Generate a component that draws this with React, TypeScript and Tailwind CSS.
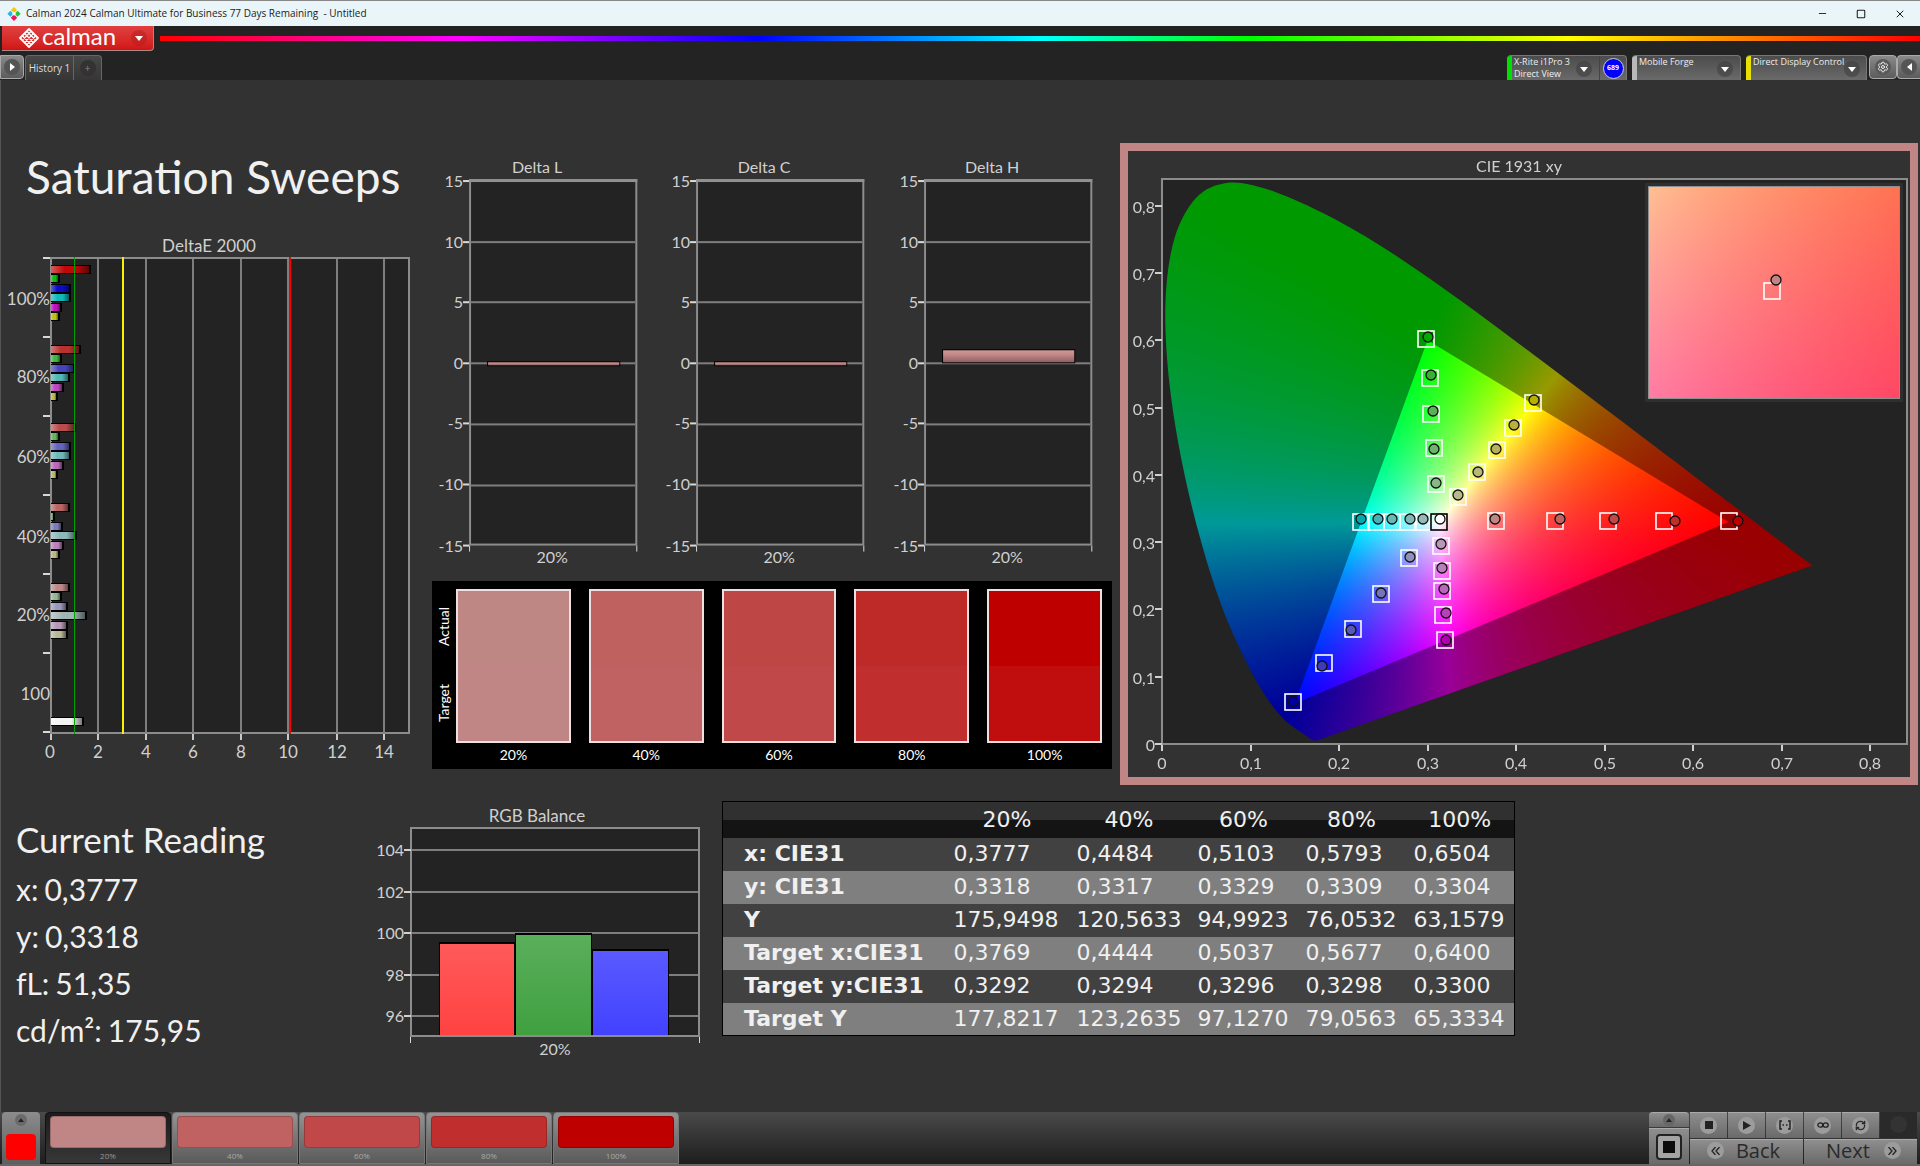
import { useLayoutEffect, useRef } from "react";
import type { ReactNode } from "react";
import { Minus, Square, X, Settings, RefreshCw } from "lucide-react";

/* ---------- shared data ---------- */

const LEVELS = [
  { label: "20%", actual: "#be8784", target: "#c08685" },
  { label: "40%", actual: "#be615f", target: "#c06261" },
  { label: "60%", actual: "#be4745", target: "#c04848" },
  { label: "80%", actual: "#be2a28", target: "#c02f2e" },
  { label: "100%", actual: "#be0000", target: "#c00d0d" },
];

/* ---------- DeltaE 2000 ---------- */

type Bar = [end: number, color: string];
const DELTA_E: { label: string; y: number; labelY: number; bars: Bar[] }[] = [
  { label: "100%", y: 34, labelY: 64, bars: [[91, "#c00808"], [60, "#10b810"], [71, "#0c0cc0"], [71, "#10b8b8"], [62, "#c010c0"], [60, "#c0c010"]] },
  { label: "80%", y: 114, labelY: 142, bars: [[81, "#bc3030"], [62, "#40b840"], [75, "#4444bc"], [70, "#50b8b8"], [64, "#bc48bc"], [58, "#bcbc48"]] },
  { label: "60%", y: 192, labelY: 222, bars: [[76, "#bc4c4c"], [60, "#5cb85c"], [71, "#6464bc"], [71, "#70b8b8"], [64, "#bc68bc"], [58, "#bcbc6c"]] },
  { label: "40%", y: 272, labelY: 302, bars: [[70, "#bc6464"], [55, "#74b874"], [63, "#7c7cbc"], [77, "#8cb8b8"], [64, "#bc80bc"], [60, "#b8b880"]] },
  { label: "20%", y: 352, labelY: 380, bars: [[70, "#bc8888"], [62, "#94b894"], [68, "#9898bc"], [87, "#a0b4b4"], [68, "#b898b8"], [68, "#b8b898"]] },
];

function HBar({ y, end, color }: { y: number; end: number; color: string }) {
  return (
    <g>
      <rect x={51} y={y - 4} width={end - 51} height={9} fill="#000" />
      <rect x={51} y={y - 3} width={end - 53} height={7} fill={color} />
      <rect x={51} y={y - 3} width={end - 53} height={7} fill="url(#barShade)" />
    </g>
  );
}

function DeltaEChart() {
  return (
    <svg viewBox="0 0 430 536" className="block w-full fill-[#d0d0d0] font-[Lato,sans-serif] text-[17px]" role="img" aria-label="DeltaE 2000">
      <defs>
        <linearGradient id="barShade">
          <stop offset="0" stopColor="#fff" stopOpacity="0.35" />
          <stop offset="0.35" stopColor="#fff" stopOpacity="0" />
          <stop offset="0.65" stopColor="#000" stopOpacity="0" />
          <stop offset="1" stopColor="#000" stopOpacity="0.5" />
        </linearGradient>
      </defs>
      <text x={209} y={17} textAnchor="middle">DeltaE 2000</text>
      <rect x={51} y={23} width={358} height={475} fill="#232323" stroke="#8c8c8c" strokeWidth={2} />
      {[0, 1, 2, 3, 4, 5, 6].map((i) => (
        <rect key={i} x={43} y={22 + i * 79} width={7} height={2} fill="#d8d8d8" />
      ))}
      {[98, 146, 193, 241, 288, 337, 384].map((x, i) => (
        <g key={x}>
          <rect x={x - 1} y={24} width={2} height={474} fill="#7e7e7e" />
          <rect x={x - 1} y={499} width={2} height={6} fill="#c8c8c8" />
          <text x={x} y={523} textAnchor="middle">{2 * (i + 1)}</text>
        </g>
      ))}
      <rect x={50} y={499} width={2} height={6} fill="#c8c8c8" />
      <text x={50} y={523} textAnchor="middle">0</text>
      {DELTA_E.map((g) => (
        <g key={g.label}>
          <text x={50} y={g.labelY + 6} textAnchor="end">{g.label}</text>
          {g.bars.map(([end, color], i) => (
            <HBar key={color} y={g.y + Math.round(i * 9.4)} end={end} color={color} />
          ))}
        </g>
      ))}
      <text x={50} y={465} textAnchor="end">100</text>
      <HBar y={486} end={84} color="#f4f4f4" />
      <rect x={74} y={22} width={1} height={477} fill="#00a000" />
      <rect x={122} y={22} width={2} height={477} fill="#f4f400" />
      <rect x={289} y={22} width={2} height={477} fill="#f80000" />
    </svg>
  );
}

/* ---------- Delta L / C / H ---------- */

function DeltaChart({ title, top, height }: { title: string; top: number; height: number }) {
  return (
    <svg viewBox="0 0 227 416" className="block w-full fill-[#d0d0d0] font-[Lato,sans-serif] text-[16px]" role="img" aria-label={title}>
      <defs>
        <linearGradient id="pinkBar" x1="0" y1="0" x2="0" y2="1">
          <stop offset="0" stopColor="#cf9a99" />
          <stop offset="0.4" stopColor="#c08685" />
          <stop offset="1" stopColor="#8d6060" />
        </linearGradient>
      </defs>
      <text x={107} y={23} textAnchor="middle">{title}</text>
      <rect x={40} y={30} width={166} height={364} fill="#232323" stroke="#8c8c8c" strokeWidth={2} />
      <rect x={39} y={29} width={168} height={3} fill="#909090" />
      {[15, 10, 5, 0, -5, -10, -15].map((v, i) => (
        <g key={v}>
          {i > 0 && i < 6 && <rect x={41} y={30 + Math.round(i * 60.7)} width={164} height={2} fill="#7e7e7e" />}
          <rect x={33} y={30 + Math.round(i * 60.6)} width={6} height={2} fill="#d8d8d8" />
          <text x={33} y={37 + Math.round(i * 60.6)} textAnchor="end">{v}</text>
        </g>
      ))}
      <rect x={39} y={395} width={1} height={6} fill="#d8d8d8" />
      <rect x={206} y={395} width={1} height={6} fill="#d8d8d8" />
      <rect x={57} y={top} width={133} height={height} fill="#000" />
      <rect x={58} y={top + 1} width={131} height={height - 2} fill="url(#pinkBar)" />
      <text x={122} y={412} textAnchor="middle">20%</text>
    </svg>
  );
}

/* ---------- swatch comparison ---------- */

function SwatchPanel() {
  return (
    <div className="ml-0.5 mr-2 flex bg-black pt-2 pr-2.5 pb-1 font-[Lato,sans-serif] text-sm text-white">
      <div className="flex w-6 shrink-0 flex-col items-center justify-around pb-6">
        <span className="rotate-180 [writing-mode:vertical-rl]">Actual</span>
        <span className="rotate-180 [writing-mode:vertical-rl]">Target</span>
      </div>
      <div className="grid flex-1 grid-cols-5 gap-[18px]">
        {LEVELS.map((l) => (
          <figure key={l.label} className="text-center">
            <div className="flex h-[154px] flex-col border-2 border-[#eee0e0]">
              <div className="flex-1" style={{ backgroundColor: l.actual }} />
              <div className="flex-1" style={{ backgroundColor: l.target }} />
            </div>
            <figcaption className="pt-0.5">{l.label}</figcaption>
          </figure>
        ))}
      </div>
    </div>
  );
}

/* ---------- CIE 1931 xy ---------- */

const LOCUS: [number, number][] = [
  [0.1741, 0.005], [0.1714, 0.0051], [0.1689, 0.0069], [0.1644, 0.0109], [0.1566, 0.0177], [0.144, 0.0297],
  [0.1355, 0.0399], [0.1241, 0.0578], [0.1096, 0.0868], [0.0913, 0.1327], [0.0687, 0.2007], [0.0454, 0.295],
  [0.0235, 0.4127], [0.0082, 0.5384], [0.0039, 0.6548], [0.0139, 0.7502], [0.0389, 0.812], [0.0743, 0.8338],
  [0.1142, 0.8262], [0.1547, 0.8059], [0.1929, 0.7816], [0.2296, 0.7543], [0.2658, 0.7243], [0.3016, 0.6923],
  [0.3373, 0.6589], [0.3731, 0.6245], [0.4087, 0.5896], [0.4441, 0.5547], [0.4788, 0.5202], [0.5125, 0.4866],
  [0.5448, 0.4544], [0.5752, 0.4242], [0.6029, 0.3965], [0.627, 0.3725], [0.6482, 0.3514], [0.6658, 0.334],
  [0.6915, 0.3083], [0.7079, 0.292], [0.719, 0.2809], [0.726, 0.274], [0.7347, 0.2653],
];

const W = 782;
const H = 626;
const PLOT = { left: 34, top: 28, right: 779, bottom: 593 };
const toPx = (x: number, y: number): [number, number] => [PLOT.left + x * 885, PLOT.bottom - y * 673];

/* linear Rec.709 colour of a chromaticity, scaled to its brightest channel */
function chroma(x: number, y: number): [number, number, number] {
  const yy = Math.max(y, 0.0001);
  const X = x / yy;
  const Z = (1 - x - yy) / yy;
  const rgb = [
    3.2406 * X - 1.5372 - 0.4986 * Z,
    -0.9689 * X + 1.8758 + 0.0415 * Z,
    0.0557 * X - 0.204 + 1.057 * Z,
  ].map((v) => Math.max(v, 0));
  const max = Math.max(...rgb);
  return [rgb[0] / max, rgb[1] / max, rgb[2] / max];
}

function paintField(w: number, h: number, gain: number, at: (px: number, py: number) => [number, number]) {
  const c = document.createElement("canvas");
  c.width = w;
  c.height = h;
  const ctx = c.getContext("2d")!;
  const img = ctx.createImageData(w, h);
  for (let j = 0; j < h; j++) {
    for (let i = 0; i < w; i++) {
      const [x, y] = at(i, j);
      const [r, g, b] = chroma(x, y);
      const o = (j * w + i) * 4;
      img.data[o] = r * 255 * gain;
      img.data[o + 1] = g * 255 * gain;
      img.data[o + 2] = b * 255 * gain;
      img.data[o + 3] = 255;
    }
  }
  ctx.putImageData(img, 0, 0);
  return c;
}

function paintGamut(ctx: CanvasRenderingContext2D) {
  ctx.clearRect(0, 0, W, H);
  ctx.fillStyle = "#232323";
  ctx.fillRect(PLOT.left, PLOT.top, PLOT.right - PLOT.left, PLOT.bottom - PLOT.top);
  const at = (px: number, py: number): [number, number] => [(px - PLOT.left) / 885, (PLOT.bottom - py) / 673];

  ctx.save();
  ctx.beginPath();
  const pts = LOCUS.map(([x, y]) => toPx(x, y));
  ctx.moveTo(...pts[0]);
  for (let i = 0; i < pts.length - 1; i++) {
    const p0 = pts[Math.max(i - 1, 0)];
    const p1 = pts[i];
    const p2 = pts[i + 1];
    const p3 = pts[Math.min(i + 2, pts.length - 1)];
    ctx.bezierCurveTo(
      p1[0] + (p2[0] - p0[0]) / 6, p1[1] + (p2[1] - p0[1]) / 6,
      p2[0] - (p3[0] - p1[0]) / 6, p2[1] - (p3[1] - p1[1]) / 6,
      p2[0], p2[1],
    );
  }
  ctx.closePath();
  ctx.clip();
  ctx.drawImage(paintField(W, H, 0.6, at), 0, 0);
  ctx.beginPath();
  ctx.moveTo(...toPx(0.64, 0.33));
  ctx.lineTo(...toPx(0.3, 0.6));
  ctx.lineTo(...toPx(0.15, 0.06));
  ctx.closePath();
  ctx.clip();
  ctx.drawImage(paintField(W, H, 1, at), 0, 0);
  ctx.restore();

  ctx.fillStyle = "#2f2f2f";
  ctx.fillRect(517, 32, 258, 219);
  ctx.fillStyle = "#8f8f8f";
  ctx.fillRect(520, 35, 252, 213);
  const inset = paintField(250, 210, 1, (px, py) => [0.3519 + px * 0.0002, 0.3542 - (py * 0.05) / 210]);
  ctx.drawImage(inset, 521, 36, 250, 211);
}

/* targets and readings, in chart units, each series from 20% to 100% */
type Pt = [number, number];
const SERIES: { colors: string[]; targets: Pt[]; reads: Pt[] }[] = [
  {
    colors: ["#8ab68a", "#70b070", "#58b058", "#38b038", "#00a800"],
    targets: [[308, 333], [306, 297], [303, 263], [302, 227], [298, 188]],
    reads: [[308, 332], [306, 298], [305, 260], [303, 224], [300, 186]],
  },
  {
    colors: ["#b8b890", "#b8b878", "#b8b060", "#b8b040", "#b8b000"],
    targets: [[330, 346], [349, 321], [369, 299], [385, 277], [405, 252]],
    reads: [[330, 344], [350, 321], [368, 298], [386, 274], [406, 249]],
  },
  {
    colors: ["#98b8b8", "#80b8b8", "#68b8b8", "#48b0b8", "#00a8b0"],
    targets: [[295, 371], [280, 371], [264, 371], [248, 371], [233, 371]],
    reads: [[295, 368], [282, 368], [264, 368], [250, 368], [233, 368]],
  },
  {
    colors: ["#b898b8", "#b880b8", "#b868b8", "#b840b8", "#b000b0"],
    targets: [[313, 395], [314, 420], [314, 440], [315, 464], [317, 489]],
    reads: [[313, 393], [314, 417], [316, 438], [318, 462], [318, 489]],
  },
  {
    colors: ["#9090b8", "#7474b8", "#5858b8", "#3c3cb8", "#0000a0"],
    targets: [[281, 407], [253, 443], [225, 478], [196, 512], [165, 551]],
    reads: [[282, 406], [253, 442], [223, 479], [194, 515], [165, 550]],
  },
  {
    colors: ["#c08685", "#c06261", "#c04848", "#c02f2e", "#b80000"],
    targets: [[368, 370], [427, 370], [480, 370], [536, 370], [601, 370]],
    reads: [[367, 368], [432, 368], [486, 368], [547, 370], [610, 370]],
  },
];

function Target({ x, y, stroke = "#fff" }: { x: number; y: number; stroke?: string }) {
  return <rect x={x - 8} y={y - 8} width={16} height={16} fill="none" stroke={stroke} strokeWidth={1.6} />;
}

function Reading({ x, y, fill }: { x: number; y: number; fill: string }) {
  return <circle cx={x} cy={y} r={5} fill={fill} stroke="#111" strokeWidth={1.3} />;
}

function CieChart() {
  const ref = useRef<HTMLCanvasElement>(null);
  useLayoutEffect(() => {
    const ctx = ref.current?.getContext("2d");
    if (ctx) paintGamut(ctx);
  }, []);
  return (
    <div className="relative border-8 border-[#c08685]">
      <canvas ref={ref} width={W} height={H} className="block w-full" />
      <svg viewBox="0 0 782 626" className="absolute inset-0 size-full fill-[#d0d0d0] font-[Lato,sans-serif] text-[16px]" role="img" aria-label="CIE 1931 xy">
        <text x={391} y={21} textAnchor="middle">CIE 1931 xy</text>
        <rect x={34} y={28} width={745} height={565} fill="none" stroke="#8c8c8c" strokeWidth={2} />
        {[0, 1, 2, 3, 4, 5, 6, 7, 8].map((n) => {
          const x = Math.round(34 + n * 88.5);
          const y = Math.round(593 - n * 67.3);
          const label = n === 0 ? "0" : `0,${n}`;
          return (
            <g key={n}>
              <rect x={27} y={y - 1} width={7} height={2} fill="#d0d0d0" />
              <text x={27} y={y + 7} textAnchor="end">{label}</text>
              <rect x={x - 1} y={594} width={2} height={6} fill="#d0d0d0" />
              <text x={x} y={618} textAnchor="middle">{label}</text>
            </g>
          );
        })}
        {SERIES.map((s) => (
          <g key={s.colors[0]}>
            {s.targets.map(([x, y]) => <Target key={`${x},${y}`} x={x} y={y} />)}
            {s.reads.map(([x, y], i) => <Reading key={`${x},${y}`} x={x} y={y} fill={s.colors[i]} />)}
          </g>
        ))}
        <Target x={311} y={371} stroke="#000" />
        <Reading x={312} y={368} fill="#fff" />
        <Target x={644} y={140} />
        <Reading x={648} y={129} fill="#c08685" />
      </svg>
    </div>
  );
}

/* ---------- RGB balance ---------- */

function RgbBalance() {
  const bars = [
    { x: 69, w: 76, top: 136, a: "#ff5a5a", b: "#ff4242" },
    { x: 145, w: 77, top: 127, a: "#5aaf5a", b: "#40a040" },
    { x: 222, w: 77, top: 143, a: "#5a5aff", b: "#4242ff" },
  ];
  return (
    <svg viewBox="0 0 350 256" className="block w-full fill-[#d0d0d0] font-[Lato,sans-serif] text-[16px]" role="img" aria-label="RGB Balance">
      <defs>
        {bars.map((b) => (
          <linearGradient key={b.a} id={`bal${b.x}`} x1="0" y1="0" x2="0" y2="1">
            <stop offset="0" stopColor={b.a} />
            <stop offset="1" stopColor={b.b} />
          </linearGradient>
        ))}
      </defs>
      <text x={167} y={15} textAnchor="middle" className="text-[17px]">RGB Balance</text>
      <rect x={41} y={21} width={288} height={208} fill="#232323" stroke="#8c8c8c" strokeWidth={2} />
      {[104, 102, 100, 98, 96].map((v, i) => {
        const y = 43 + Math.round(i * 41.5);
        return (
          <g key={v}>
            <rect x={42} y={y - 1} width={286} height={2} fill="#7e7e7e" />
            <rect x={34} y={y - 1} width={7} height={2} fill="#d0d0d0" />
            <text x={34} y={y + 6} textAnchor="end">{v}</text>
          </g>
        );
      })}
      {bars.map((b) => (
        <g key={b.x}>
          <rect x={b.x} y={b.top - 1} width={b.w} height={229 - b.top} fill="#000" />
          <rect x={b.x + 1} y={b.top + 1} width={b.w - 2} height={227 - b.top} fill={`url(#bal${b.x})`} />
        </g>
      ))}
      <rect x={40} y={230} width={1} height={6} fill="#d8d8d8" />
      <rect x={329} y={230} width={1} height={6} fill="#d8d8d8" />
      <text x={185} y={248} textAnchor="middle">20%</text>
    </svg>
  );
}

/* ---------- results table ---------- */

const ROWS: [string, string[]][] = [
  ["x: CIE31", ["0,3777", "0,4484", "0,5103", "0,5793", "0,6504"]],
  ["y: CIE31", ["0,3318", "0,3317", "0,3329", "0,3309", "0,3304"]],
  ["Y", ["175,9498", "120,5633", "94,9923", "76,0532", "63,1579"]],
  ["Target x:CIE31", ["0,3769", "0,4444", "0,5037", "0,5677", "0,6400"]],
  ["Target y:CIE31", ["0,3292", "0,3294", "0,3296", "0,3298", "0,3300"]],
  ["Target Y", ["177,8217", "123,2635", "97,1270", "79,0563", "65,3334"]],
];

function ResultsTable() {
  return (
    <table className="w-full table-fixed border-collapse border border-black font-['DejaVu_Sans',sans-serif] text-[22px] leading-7 text-[#f0f0f0]">
      <colgroup>
        <col />
        <col className="w-[123px]" />
        <col className="w-[121px]" />
        <col className="w-[108px]" />
        <col className="w-[108px]" />
        <col className="w-[109px]" />
      </colgroup>
      <thead>
        <tr className="h-9 bg-linear-to-b from-[#303030] from-50% to-[#141414] to-50%">
          <td />
          {LEVELS.map((l) => <th key={l.label} scope="col" className="p-0 font-normal">{l.label}</th>)}
        </tr>
      </thead>
      <tbody>
        {ROWS.map(([name, values]) => (
          <tr key={name} className="h-[33px] odd:bg-[#414141] even:bg-[#7f7f7f]">
            <th scope="row" className="p-0 pl-[21px] text-left font-bold whitespace-nowrap">{name}</th>
            {values.map((v, i) => <td key={i} className="p-0 pl-2">{v}</td>)}
          </tr>
        ))}
      </tbody>
    </table>
  );
}

/* ---------- window chrome ---------- */

function TitleBar() {
  return (
    <header className="flex h-[26px] items-center border-t border-[#888] bg-[#eaf5f9] pl-[7px] font-['Open_Sans',sans-serif] text-[10px] text-[#1c1c1c]">
      <svg viewBox="0 0 14 14" className="mr-[5px] size-[14px]" aria-hidden="true">
        <path d="M7 0l3 3-3 3-3-3z" fill="#ffc400" />
        <path d="M3.400 3.800l3 3-3 3-3-3z" fill="#22b8e8" />
        <path d="M10.600 3.800l3 3-3 3-3-3z" fill="#1fc83a" />
        <path d="M7 7.600l3.200 3.200L7 14l-3.200-3.200z" fill="#f0145a" />
        <path d="M7 4.800l2 2-2 2-2-2z" fill="#fff" />
      </svg>
      <h1 className="flex-1 whitespace-pre">Calman 2024 Calman Ultimate for Business 77 Days Remaining  - Untitled</h1>
      <div className="flex gap-7 pr-3.5">
        <button aria-label="Minimize"><Minus size={11} strokeWidth={2} /></button>
        <button aria-label="Maximize"><Square size={10} strokeWidth={2.5} /></button>
        <button aria-label="Close"><X size={12} strokeWidth={2} /></button>
      </div>
    </header>
  );
}

function Caret({ className = "" }: { className?: string }) {
  return (
    <span className={`flex size-4 items-center justify-center rounded-full ${className}`}>
      <svg viewBox="0 0 8 5" className="h-[5px] w-2 fill-white" aria-hidden="true"><path d="M0 0h8L4 5z" /></svg>
    </span>
  );
}

function BrandBar() {
  return (
    <div className="flex h-[25px] pl-0.5">
      <button className="flex w-[152px] items-center rounded-br border-r border-b border-[#a88] bg-linear-to-b from-[#e04040] to-[#d01414] pl-[17px] text-white" aria-label="Calman menu">
        <svg viewBox="0 0 20 20" className="size-5" fill="none" stroke="#fff" aria-hidden="true">
          <path d="M10 1l9 9-9 9-9-9z" strokeWidth="1.800" strokeLinejoin="round" />
          <path d="M5.500 5.500l9 9M14.500 5.500l-9 9M8 3.500l8 8M12 3.500l-8 8M3.500 8l8.500 8.500M16.500 8L8 16.500" strokeWidth="1.200" />
        </svg>
        <span className="ml-[3px] flex h-5 items-center pb-1 font-['Lato',sans-serif] text-2xl">calman</span>
        <Caret className="ml-auto mr-1.5 bg-[#b81c1c]/50" />
      </button>
      <div className="mt-2.5 ml-1.5 h-[5px] flex-1 bg-[linear-gradient(to_right,#f00,#f0f_17%,#00f_34%,#0ff_50%,#0f0_62%,#ff0_80%,#f00)]" />
    </div>
  );
}

function DeviceTab({ color, children, width, extra }: { color: string; children: ReactNode; width: string; extra?: ReactNode }) {
  return (
    <div className={`flex h-[25px] overflow-hidden rounded-t border-t border-r border-[#777] bg-linear-to-b from-[#4c4c4c] to-[#6a6a6a] ${width}`}>
      <span className={`w-[5px] shrink-0 ${color}`} />
      <button className="flex min-w-0 flex-1 items-start justify-between pr-[7px] pl-0.5 text-left">
        <span className="leading-3 whitespace-nowrap">{children}</span>
        <Caret className="mt-[5px] shrink-0 bg-[#404040]/60" />
      </button>
      {extra}
    </div>
  );
}

function TabRow() {
  const round = "flex h-6 items-center justify-center rounded border border-[#aaa] bg-linear-to-b from-[#8a8a8a] to-[#5c5c5c]";
  return (
    <nav className="mt-1 flex h-[25px] items-start font-['Open_Sans',sans-serif] text-[9px] text-[#eee]">
      <button className={`${round} w-6 rounded-l-none`} aria-label="Expand panel">
        <span className="flex size-4 items-center justify-center rounded-full bg-[#555]">
          <svg viewBox="0 0 5 8" className="h-2 w-[5px] fill-white" aria-hidden="true"><path d="M0 0l5 4-5 4z" /></svg>
        </span>
      </button>
      <div className="ml-px flex h-[25px] overflow-hidden rounded-t border border-b-0 border-[#666] bg-linear-to-b from-[#484848] to-[#363636]">
        <button className="w-12 border-r border-[#666] text-[10px] text-[#ddd]">History 1</button>
        <button className="flex w-[27px] items-center justify-center" aria-label="Add history">
          <span className="flex size-4 items-center justify-center rounded-full bg-[#333] text-[10px] text-[#888]">+</span>
        </button>
      </div>
      <div className="ml-auto flex items-start gap-[5px]">
        <DeviceTab
          color="bg-[#00e000]"
          width="w-[120px]"
          extra={
            <span className="flex w-[27px] items-center justify-center border-l border-[#444]">
              <span className="flex size-[21px] items-center justify-center rounded-full border border-[#ccd] bg-[#0000ff] text-[7px] font-bold text-white">689</span>
            </span>
          }
        >
          X-Rite i1Pro 3<br />Direct View
        </DeviceTab>
        <DeviceTab color="bg-[#b8b8b8]" width="w-[109px]">Mobile Forge</DeviceTab>
        <DeviceTab color="bg-[#e8e000]" width="w-[121px]">Direct Display Control</DeviceTab>
      </div>
      <button className={`${round} ml-0.5 w-7`} aria-label="Settings">
        <span className="flex size-4 items-center justify-center rounded-full bg-[#5a5a5a]"><Settings size={12} /></span>
      </button>
      <button className={`${round} w-[23px] rounded-r-none border-r-0`} aria-label="Collapse panel">
        <span className="flex size-4 items-center justify-center rounded-full bg-[#555]">
          <svg viewBox="0 0 5 8" className="h-2 w-[5px] fill-white" aria-hidden="true"><path d="M5 0L0 4l5 4z" /></svg>
        </span>
      </button>
    </nav>
  );
}

/* ---------- footer ---------- */

const disc = "flex size-[17px] items-center justify-center rounded-full bg-[#9c9c9c]";
const key = "flex items-center justify-center bg-linear-to-b from-[#8e8e8e] to-[#6a6a6a] border-t border-[#aaa]";

function Footer() {
  return (
    <footer className="flex h-[54px] border-b-2 border-[#666] bg-linear-to-b from-[#4a4a4a] to-[#1e1e1e] pr-[3px] pl-0.5">
      <button className="flex w-[38px] flex-col items-center justify-between rounded-t bg-linear-to-b from-[#8c8c8c] to-[#5e5e5e] pt-0.5 pb-1" aria-label="Current colour">
        <span className="flex size-3 items-center justify-center rounded-full bg-[#6a6a6a]">
          <svg viewBox="0 0 8 5" className="h-1 w-1.5 fill-[#222]" aria-hidden="true"><path d="M0 5h8L4 0z" /></svg>
        </span>
        <span className="h-[26px] w-[30px] rounded-sm bg-[#ff0000]" />
      </button>
      <div className="ml-[5px] flex gap-px">
        {LEVELS.map((l, i) => (
          <button
            key={l.label}
            className={`flex w-[126px] flex-col items-center rounded-t border px-1 pt-[3px] font-['Open_Sans',sans-serif] text-[8px] ${
              i === 0
                ? "border-[#111] bg-linear-to-b from-[#1c1c1c] to-[#383838] text-[#999]"
                : "border-[#777] bg-linear-to-b from-[#949494] to-[#5a5a5a] text-[#aaa]"
            }`}
          >
            <span
              className="h-8 w-full rounded-sm border border-black/20"
              style={{ backgroundColor: i === 4 ? l.actual : l.target }}
            />
            <span className="pt-0.5">{l.label}</span>
          </button>
        ))}
      </div>
      <div className="ml-auto flex gap-px text-[#2a2a2a]">
        <div className="flex w-10 flex-col gap-px">
          <button className={`${key} h-[15px] rounded-t`} aria-label="Show options">
            <span className="flex size-3 items-center justify-center rounded-full bg-[#666]">
              <svg viewBox="0 0 8 5" className="h-1 w-1.5 fill-[#222]" aria-hidden="true"><path d="M0 5h8L4 0z" /></svg>
            </span>
          </button>
          <button className={`${key} flex-1`} aria-label="Window pattern">
            <span className="flex size-[26px] items-center justify-center rounded border-2 border-[#222] bg-[#a4a4a4]">
              <span className="size-3 bg-[#0c0c0c]" />
            </span>
          </button>
        </div>
        <div className="grid w-[227px] grid-rows-2 gap-px">
          <div className="grid grid-cols-6 gap-px">
            <button className={key} aria-label="Stop"><span className={disc}><span className="size-2 bg-[#222]" /></span></button>
            <button className={key} aria-label="Play">
              <span className={disc}><svg viewBox="0 0 8 9" className="h-[9px] w-2 fill-[#222]" aria-hidden="true"><path d="M0 0l8 4.500L0 9z" /></svg></span>
            </button>
            <button className={key} aria-label="Read series">
              <span className={disc}>
                <svg viewBox="0 0 12 10" className="h-2.5 w-3" fill="none" stroke="#222" strokeWidth="1.500" aria-hidden="true">
                  <path d="M3 1H1v8h2M9 1h2v8H9M3.500 5h1.500M7 5h1.500" />
                </svg>
              </span>
            </button>
            <button className={key} aria-label="Read continuously">
              <span className={disc}>
                <svg viewBox="0 0 12 6" className="h-1.5 w-3" fill="none" stroke="#222" strokeWidth="1.300" aria-hidden="true">
                  <ellipse cx="3.300" cy="3" rx="2.500" ry="2.200" /><ellipse cx="8.700" cy="3" rx="2.500" ry="2.200" />
                </svg>
              </span>
            </button>
            <button className={key} aria-label="Refresh"><span className={disc}><RefreshCw size={11} strokeWidth={3} /></span></button>
            <span className="flex items-center justify-center bg-[#2a2a2a]"><span className="size-[17px] rounded-full bg-[#333]" /></span>
          </div>
          <div className="grid grid-cols-2 gap-px font-['Open_Sans',sans-serif] text-xl leading-none">
            <button className={`${key} gap-3 pr-1.5 pb-0.5`}>
              <span className={disc}>
                <svg viewBox="0 0 9 8" className="h-2 w-[9px]" fill="none" stroke="#222" strokeWidth="1.300" aria-hidden="true"><path d="M4.500 0L1 4l3.500 4M8.500 0L5 4l3.500 4" /></svg>
              </span>
              Back
            </button>
            <button className={`${key} gap-3.5 pb-0.5 pl-1.5`}>
              Next
              <span className={disc}>
                <svg viewBox="0 0 9 8" className="h-2 w-[9px]" fill="none" stroke="#222" strokeWidth="1.300" aria-hidden="true"><path d="M.5 0L4 4 .5 8M4.500 0L8 4 4.500 8" /></svg>
              </span>
            </button>
          </div>
        </div>
      </div>
    </footer>
  );
}

/* ---------- page ---------- */

export default function App() {
  return (
    <div className="flex min-h-screen flex-col bg-[#323232]">
      <TitleBar />
      <div className="bg-[#232323]">
        <BrandBar />
        <TabRow />
      </div>
      <main className="flex-1 pt-[63px] font-[Lato,sans-serif] text-[#f0f0f0] shadow-[inset_1px_0_#555]">
        <section className="grid grid-cols-[430fr_690fr_798fr] items-start pr-0.5">
          <div className="pt-1">
            <h2 className="mb-7 pl-[26px] text-[46px] leading-[60px]">Saturation Sweeps</h2>
            <DeltaEChart />
          </div>
          <div className="flex flex-col gap-3.5 pt-[7px]">
            <div className="grid grid-cols-3 pr-2">
              <DeltaChart title="Delta L" top={211} height={5} />
              <DeltaChart title="Delta C" top={211} height={5} />
              <DeltaChart title="Delta H" top={199} height={14} />
            </div>
            <SwatchPanel />
          </div>
          <CieChart />
        </section>
        <section className="grid grid-cols-[370fr_350fr_795fr_403fr] items-start pt-4 pr-0.5">
          <div className="pt-3.5 pl-4">
            <h3 className="mb-[3px] text-[35px] leading-[48px]">Current Reading</h3>
            <dl className="text-[30px] leading-[47px]">
              {[["x:", "0,3777"], ["y:", "0,3318"], ["fL:", "51,35"], ["cd/m²:", "175,95"]].map(([k, v]) => (
                <div key={k} className="flex gap-1.5"><dt>{k}</dt><dd>{v}</dd></div>
              ))}
            </dl>
          </div>
          <div className="pt-1.5"><RgbBalance /></div>
          <div className="pl-0.5"><ResultsTable /></div>
        </section>
      </main>
      <Footer />
    </div>
  );
}
